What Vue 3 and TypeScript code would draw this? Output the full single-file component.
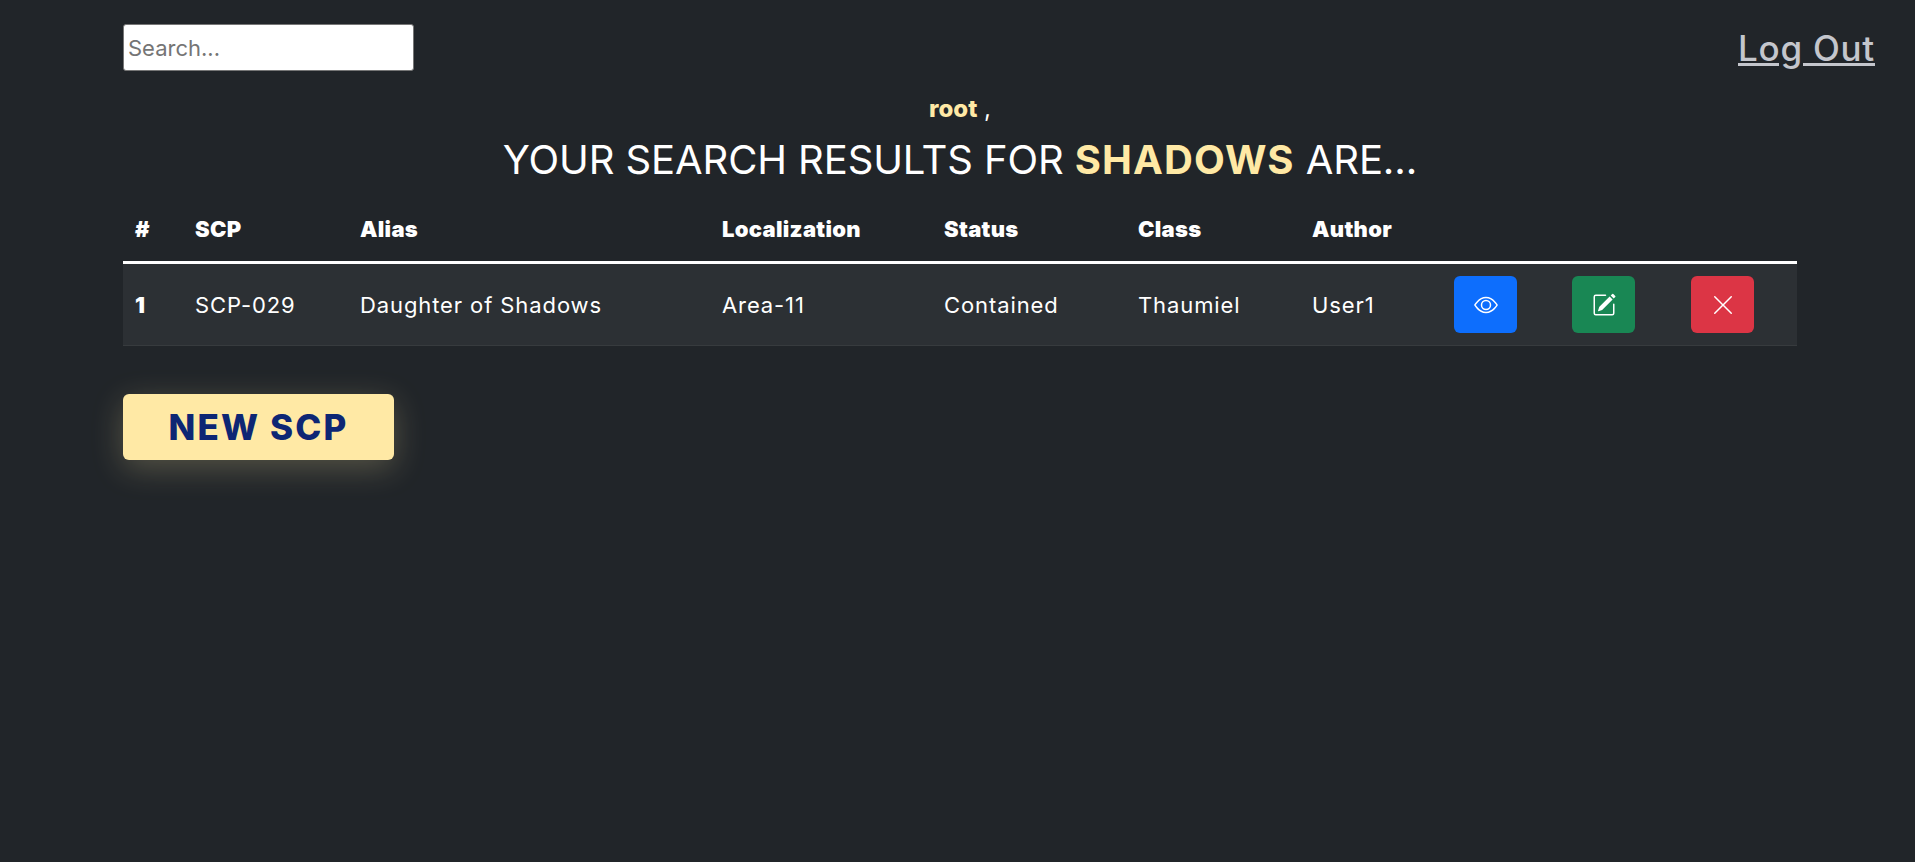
<template>
  <div class="page">
    <header class="topBar">
      <input v-model="search" class="searchInput" placeholder="Search..." />
      <a class="logOut" href="#">Log Out</a>
    </header>

    <main class="content">
      <p class="greeting"><strong>root</strong> ,</p>
      <h1 class="title">YOUR SEARCH RESULTS FOR <strong>SHADOWS</strong> ARE...</h1>

      <table class="results">
        <colgroup>
          <col v-for="w in colWidths" :key="w.id" :style="{ width: w.px + 'px' }" />
        </colgroup>
        <thead>
          <tr>
            <th v-for="h in headers" :key="h">{{ h }}</th>
            <th colspan="3"></th>
          </tr>
        </thead>
        <tbody>
          <tr v-for="(row, i) in rows" :key="row.scp">
            <th>{{ i + 1 }}</th>
            <td>{{ row.scp }}</td>
            <td>{{ row.alias }}</td>
            <td>{{ row.localization }}</td>
            <td>{{ row.status }}</td>
            <td>{{ row.objectClass }}</td>
            <td>{{ row.author }}</td>
            <td>
              <button class="iconBtn blue" aria-label="View">
                <svg viewBox="0 0 16 16" fill="currentColor">
                  <path d="M16 8s-3-5.5-8-5.5S0 8 0 8s3 5.5 8 5.5S16 8 16 8zM1.173 8a13.133 13.133 0 0 1 1.66-2.043C4.12 4.668 5.88 3.5 8 3.5c2.12 0 3.879 1.168 5.168 2.457A13.133 13.133 0 0 1 14.828 8c-.058.087-.122.183-.195.288-.335.48-.83 1.12-1.465 1.755C11.879 11.332 10.119 12.5 8 12.5c-2.12 0-3.879-1.168-5.168-2.457A13.134 13.134 0 0 1 1.172 8z" />
                  <path d="M8 5.5a2.5 2.5 0 1 0 0 5 2.5 2.5 0 0 0 0-5zM4.5 8a3.5 3.5 0 1 1 7 0 3.5 3.5 0 0 1-7 0z" />
                </svg>
              </button>
            </td>
            <td>
              <button class="iconBtn green" aria-label="Edit">
                <svg viewBox="0 0 16 16" fill="currentColor">
                  <path d="M15.502 1.94a.5.5 0 0 1 0 .706L14.459 3.69l-2-2L13.502.646a.5.5 0 0 1 .707 0l1.293 1.293zm-1.75 2.456-2-2L4.939 9.21a.5.5 0 0 0-.121.196l-.805 2.414a.25.25 0 0 0 .316.316l2.414-.805a.5.5 0 0 0 .196-.12l6.813-6.814z" />
                  <path fill-rule="evenodd" d="M1 13.5A1.5 1.5 0 0 0 2.5 15h11a1.5 1.5 0 0 0 1.5-1.5v-6a.5.5 0 0 0-1 0v6a.5.5 0 0 1-.5.5h-11a.5.5 0 0 1-.5-.5v-11a.5.5 0 0 1 .5-.5H9a.5.5 0 0 0 0-1H2.5A1.5 1.5 0 0 0 1 2.5v11z" />
                </svg>
              </button>
            </td>
            <td>
              <button class="iconBtn red" aria-label="Delete">
                <svg viewBox="0 0 16 16" fill="currentColor">
                  <path d="M2.146 2.854a.5.5 0 1 1 .708-.708L8 7.293l5.146-5.147a.5.5 0 0 1 .708.708L8.707 8l5.147 5.146a.5.5 0 0 1-.708.708L8 8.707l-5.146 5.147a.5.5 0 0 1-.708-.708L7.293 8 2.146 2.854Z" />
                </svg>
              </button>
            </td>
          </tr>
        </tbody>
      </table>

      <button class="newBtn">NEW SCP</button>
    </main>
  </div>
</template>

<script setup lang="ts">
import { ref } from 'vue'

const search = ref('')

const headers = ['#', 'SCP', 'Alias', 'Localization', 'Status', 'Class', 'Author']
const colWidths = [60, 165, 362, 222, 194, 174, 142, 118, 119, 118].map((px, id) => ({ id, px }))

const rows = [
  {
    scp: 'SCP-029',
    alias: 'Daughter of Shadows',
    localization: 'Area-11',
    status: 'Contained',
    objectClass: 'Thaumiel',
    author: 'User1',
  },
]
</script>

<style>
html,
body {
  background: #212529;
}
</style>

<style scoped>
.page {
  min-height: 862px;
  box-sizing: border-box;
  background: #212529;
  color: #fff;
  font-family: Inter, 'Open Sans', sans-serif;
  overflow: hidden;
}

.topBar {
  display: flex;
  justify-content: space-between;
  align-items: center;
  padding: 24px 40px 0 123px;
  height: 47px;
}

.searchInput {
  box-sizing: border-box;
  width: 291px;
  height: 47px;
  padding: 1px 4px;
  border: 1px solid #767676;
  border-radius: 3px;
  background: #fff;
  font: 400 22px Inter, sans-serif;
  color: #212529;
  outline: none;
}

.searchInput::placeholder {
  color: #757575;
}

.logOut {
  padding-top: 2px;
  color: #c4c6cc;
  font-size: 35px;
  font-weight: 500;
  letter-spacing: 0.75px;
  line-height: 47px;
  text-decoration: underline;
}

.content {
  margin: 0 118px 0 123px;
}

.greeting {
  margin: 0;
  padding-top: 21px;
  text-align: center;
  font-size: 24px;
  font-weight: 400;
  line-height: 34px;
}

.greeting strong {
  color: #ffe9a5;
  font-weight: 800;
}

.title {
  margin: 0;
  padding-top: 9px;
  text-align: center;
  font-size: 40px;
  font-weight: 400;
  letter-spacing: -0.1px;
  line-height: 50px;
}

.title strong {
  color: #ffe9a5;
  font-weight: 700;
  letter-spacing: 1.1px;
}

.results {
  width: 1674px;
  margin-top: 12px;
  table-layout: fixed;
  border-collapse: collapse;
  font-size: 22px;
  letter-spacing: 0.9px;
}

.results thead th {
  height: 64px;
  padding: 0 12px;
  text-align: left;
  font-weight: 900;
  letter-spacing: 0.3px;
  border-bottom: 3px solid #fff;
}

.results tbody tr {
  height: 83px;
  background: #2c3034;
  border-bottom: 1px solid #373b3e;
}

.results tbody th,
.results td {
  padding: 0 12px;
  text-align: left;
}

.results tbody th {
  font-weight: 900;
}

.iconBtn {
  display: flex;
  align-items: center;
  justify-content: center;
  width: 63px;
  height: 57px;
  padding: 0;
  border: 0;
  border-radius: 6px;
  color: #fff;
}

.iconBtn svg {
  width: 24px;
  height: 24px;
}

.blue {
  background: #0d6efd;
}

.green {
  background: #198754;
}

.red {
  background: #dc3545;
}

.newBtn {
  display: block;
  width: 271px;
  height: 66px;
  margin-top: 48px;
  padding: 0;
  border: 0;
  border-radius: 6px;
  background: #ffe9a5;
  color: #0d2674;
  font: 800 35px Inter, sans-serif;
  letter-spacing: 2.2px;
  box-shadow: 0 8px 32px rgba(255, 233, 165, 0.24);
}
</style>
